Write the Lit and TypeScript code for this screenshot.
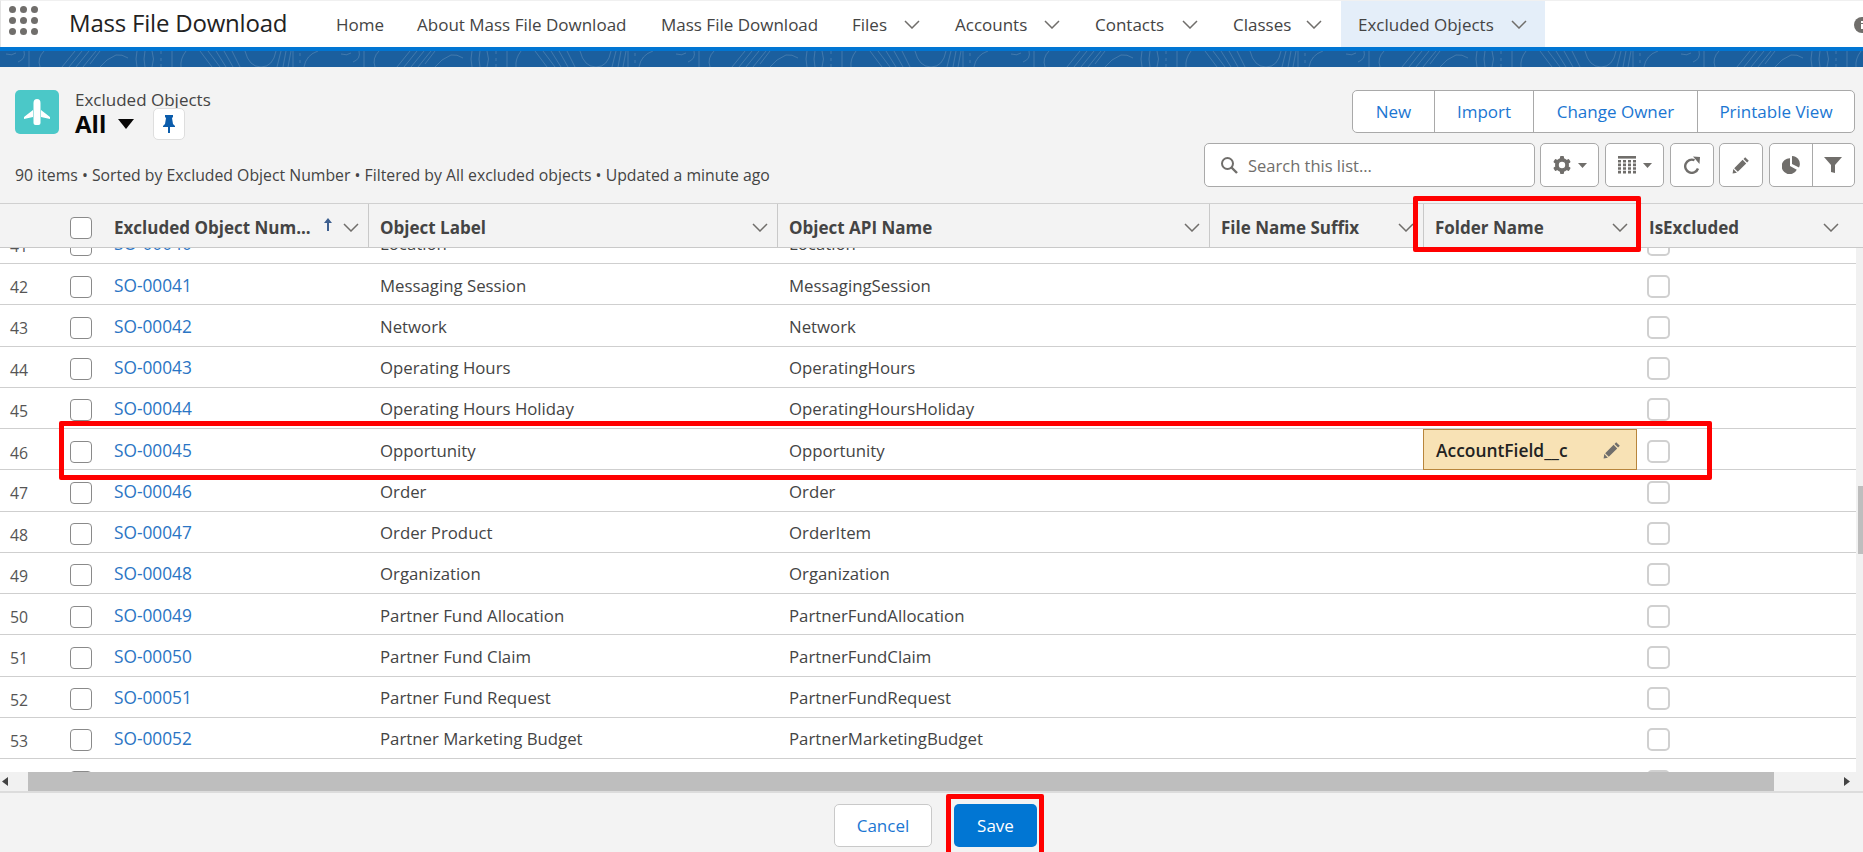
import { LitElement, html, css } from "lit";
import { customElement } from "lit/decorators.js";

const chev = html`<svg class="chev" width="16" height="9" viewBox="0 0 16 9"><path d="M1 1l7 7 7-7" fill="none" stroke="#706e6b" stroke-width="1.5"/></svg>`;

const tabs = [
  { t: "Home", w: 81 },
  { t: "About Mass File Download", w: 244 },
  { t: "Mass File Download", w: 191 },
  { t: "Files", w: 103, c: true },
  { t: "Accounts", w: 140, c: true },
  { t: "Contacts", w: 138, c: true },
  { t: "Classes", w: 124, c: true },
  { t: "Excluded Objects", w: 204, c: true, a: true },
];

const rows = [
  ["41", "SO-00040", "Location", "Location"],
  ["42", "SO-00041", "Messaging Session", "MessagingSession"],
  ["43", "SO-00042", "Network", "Network"],
  ["44", "SO-00043", "Operating Hours", "OperatingHours"],
  ["45", "SO-00044", "Operating Hours Holiday", "OperatingHoursHoliday"],
  ["46", "SO-00045", "Opportunity", "Opportunity"],
  ["47", "SO-00046", "Order", "Order"],
  ["48", "SO-00047", "Order Product", "OrderItem"],
  ["49", "SO-00048", "Organization", "Organization"],
  ["50", "SO-00049", "Partner Fund Allocation", "PartnerFundAllocation"],
  ["51", "SO-00050", "Partner Fund Claim", "PartnerFundClaim"],
  ["52", "SO-00051", "Partner Fund Request", "PartnerFundRequest"],
  ["53", "SO-00052", "Partner Marketing Budget", "PartnerMarketingBudget"],
  ["", "", "", ""],
];

const pencil = (s: number) => html`<svg width="${s}" height="${s}" viewBox="0 0 18 18"><path d="M13.2 1.2l3.6 3.6-1.7 1.7-3.6-3.6zM10.6 3.8l3.6 3.6-8.4 8.4-3.6-3.6zM1.3 13.1l3.6 3.6-4.3.9z" fill="#706e6b"/></svg>`;

@customElement("app-root")
export class AppRoot extends LitElement {
  static styles = css`
    :host { display: block; position: relative; width: 1863px; height: 852px; overflow: hidden; background: #f3f3f3; font-family: "Open Sans", "Liberation Sans", sans-serif; font-size: 16.8px; color: #444; box-sizing: border-box; }
    .nav { display: flex; align-items: stretch; height: 47px; background: #fff; box-sizing: border-box; border-top: 1px solid #f0f0f0; border-left: 1px solid #e4e4e4; overflow: hidden; }
    .nav > * { flex: none; }
    .grid { width: 29px; margin: 5px 0 0 8px; display: grid; grid-template-columns: repeat(3, 7px); grid-auto-rows: 7px; gap: 4px; }
    .grid i { border-radius: 50%; background: #706e6b; }
    .app { width: 251px; margin-left: 31px; font-size: 24px; line-height: 43px; color: #222; letter-spacing: -0.2px; white-space: nowrap; }
    .tab { display: flex; justify-content: space-between; align-items: center; box-sizing: border-box; padding: 0 19px 0 16px; color: #444; white-space: nowrap; height: 46px; font-size: 17px; }
    .tab.active { background: #e4eef9; padding-right: 18px; padding-left: 17px; }
    .info { margin: 16px 0 0 309px; }
    .blue { height: 4px; background: #0176d3; }
    .banner { display: block; width: 1863px; height: 16px; background: #1b5f9e; }
    .head { display: flex; justify-content: space-between; box-sizing: border-box; height: 136px; padding: 23px 8px 0 15px; }
    .titlewrap { display: flex; gap: 16px; }
    .appicon { width: 44px; height: 44px; border-radius: 5px; background: #4bc8c8; display: block; }
    .eyebrow { font-size: 17px; line-height: 20px; color: #444; white-space: nowrap; }
    .allrow { display: flex; align-items: flex-start; height: 32px; }
    .all { font-size: 24px; font-weight: 700; color: #080707; line-height: 28px; }
    .caret { margin: 9px 0 0 12px; }
    .pin { width: 32px; height: 32px; box-sizing: border-box; margin: -2px 0 0 19px; background: #fff; border: 1px solid #dedede; border-radius: 5px; display: flex; align-items: center; justify-content: center; }
    .meta { margin-top: 22px; line-height: 22px; font-size: 15.8px; white-space: nowrap; }
    .right { display: flex; flex-direction: column; align-items: flex-end; gap: 10px; }
    .btngroup { display: flex; height: 43px; background: #fff; border: 1px solid #a9a9a9; border-radius: 5px; box-sizing: border-box; font-size: 17px; }
    .btngroup span { display: flex; align-items: center; justify-content: center; color: #1b76d2; border-left: 1px solid #a9a9a9; box-sizing: border-box; }
    .btngroup span:first-child { border-left: 0; }
    .tools { display: flex; height: 44px; width: 851px; margin-right: 0; }
    .search { display: flex; align-items: center; gap: 10px; box-sizing: border-box; width: 331px; height: 44px; background: #fff; border: 1px solid #a9a9a9; border-radius: 5px; padding-left: 15px; color: #706e6b; margin-left: auto; font-size: 16.5px; }
    .tool { display: flex; align-items: center; justify-content: center; gap: 7px; box-sizing: border-box; height: 44px; background: #fff; border: 1px solid #a9a9a9; border-radius: 5px; }
    .w59 { width: 59px; margin-left: 5px; }
    .w59b { width: 59px; margin-left: 6px; }
    .w44 { width: 44px; margin-left: 6px; }
    .w44b { width: 44px; margin-left: 5px; }
    .pie { width: 86px; margin-left: 6px; gap: 0; }
    .pie b { flex: 1; height: 100%; display: flex; align-items: center; justify-content: center; }
    .pie b + b { border-left: 1px solid #a9a9a9; }
    .thead, .row { display: grid; grid-template-columns: 70px 44px 254px 409px 432px 214px 214px 211px 8px; }
    .thead { height: 45px; border-top: 1px solid #d0d0d0; border-bottom: 1px solid #c9c9c9; box-sizing: border-box; align-items: stretch; }
    .th { display: flex; align-items: center; justify-content: space-between; font-weight: 700; font-size: 17px; color: #444; padding: 4px 9px 0 11px; border-left: 1px solid #c9c9c9; white-space: nowrap; min-width: 0; }
    .th.first { border-left: 0; padding: 4px 9px 0 0; }
    .sort { display: flex; align-items: center; gap: 10px; }
    .arrow { margin-top: -6px; }
    .body { display: flex; height: 524px; overflow: hidden; }
    .rows { width: 1856px; background: #fff; flex: none; overflow: hidden; }
    .rowsin { margin-top: -25.25px; }
    .row { height: 41.25px; box-sizing: border-box; border-bottom: 1.5px solid #cfcfcf; align-items: center; }
    .num { padding-left: 10px; padding-top: 6px; color: #555; font-size: 15.8px; }
    .cell { padding: 2px 0 0 12px; white-space: nowrap; }
    .link { padding-top: 2px; color: #2a75c4; font-size: 17.3px; }
    .cb { display: block; width: 22px; height: 22px; box-sizing: border-box; margin-top: 5px; background: #fff; border: 1.5px solid #8a8a8a; border-radius: 4px; }
    .cb.hcb { margin-top: 13px; }
    .cb.off { width: 23px; height: 23px; border: 2px solid #d0d0d0; margin: 4px 0 0 10px; border-radius: 5px; }
    .edit { align-self: stretch; display: flex; align-items: center; justify-content: space-between; box-sizing: border-box; height: 41px; background: #f8e2b5; border: 1px solid #b8853c; padding: 0 15px 0 12px; font-weight: 600; color: #222; font-size: 17.4px; }
    .vtrack { flex: 1; background: #f1f1f1; }
    .vthumb { width: 5px; height: 68px; margin: 238px 0 0 2px; background: #bebebe; }
    .hscroll { display: flex; align-items: stretch; height: 21px; background: #f1f1f1; border-bottom: 2px solid #dcdcdc; box-sizing: border-box; }
    .harrow { width: 28px; display: flex; align-items: center; padding-left: 2px; box-sizing: border-box; }
    .hthumb { width: 1746px; background: #bebebe; }
    .harrow.r { width: 89px; justify-content: flex-end; padding-right: 13px; }
    .foot { display: flex; justify-content: center; gap: 22px; padding: 11px 0 0 8px; font-size: 17px; }
    .foot span { display: flex; align-items: center; justify-content: center; box-sizing: border-box; height: 43px; border-radius: 5px; }
    .cancel { width: 98px; background: #fff; border: 1px solid #c9c9c9; color: #1b76d2; }
    .save { width: 83px; background: #0176d3; color: #fff; }
    .mark { position: absolute; box-sizing: border-box; border: 5px solid #f00; border-radius: 2px; pointer-events: none; }
    .m1 { left: 1413px; top: 196px; width: 228px; height: 56px; }
    .m2 { left: 59px; top: 421px; width: 1653px; height: 59px; }
    .m3 { left: 946px; top: 794px; width: 98px; height: 66px; }
  `;

  header(t: string) {
    return html`<div class="th"><span>${t}</span>${chev}</div>`;
  }

  render() {
    return html`
      <div class="nav">
        <div class="grid">${Array.from({ length: 9 }, () => html`<i></i>`)}</div>
        <div class="app">Mass File Download</div>
        ${tabs.map(
          (t) => html`<div class="tab ${t.a ? "active" : ""}" style="width:${t.w}px"><span>${t.t}</span>${t.c ? chev : ""}</div>`
        )}
        <svg class="info" width="16" height="16" viewBox="0 0 16 16"><circle cx="8" cy="8" r="8" fill="#706e6b"/><rect x="7" y="7" width="2" height="5" fill="#fff"/><rect x="7" y="4" width="2" height="2" fill="#fff"/></svg>
      </div>
      <div class="blue"></div>
      <svg class="banner" viewBox="0 0 1863 16">
        <defs>
          <pattern id="tile" width="335" height="16" patternUnits="userSpaceOnUse">
            <g fill="none" stroke="#fff" stroke-opacity=".16" stroke-width="1">
              <path d="M6 3q6 2 10-1M24 0q2 8-6 11M29 0v16M44 0q-7 7-4 16"/>
              <path d="M62 16L75 0M69 16L82 0M76 16L89 0M83 16L96 0M90 13L100 0"/>
              <path d="M100 16q6-8 16-12q6-1 12 3"/>
              <path d="M137 0q-2 8 0 16M145 0q-2 8 0 16M152 0q3 8 0 16M161 0v3M161 7v3M161 13v3M172 0v16M186 0q-6 8-5 16"/>
              <path d="M200 0l12 16M208 0l12 16M216 0l10 16M224 0l9 16M232 0l8 16"/>
              <path d="M245 0q4 16 16 16q12 0 15-16"/>
              <path d="M277 16l4-16M283 16l3-16M288 16l3-16M293 0v16M300 2v3M300 9v3M318 0q-12 4-14 16"/>
            </g>
          </pattern>
        </defs>
        <rect width="1863" height="16" fill="url(#tile)"/>
      </svg>

      <div class="head">
        <div>
          <div class="titlewrap">
            <svg class="appicon" viewBox="0 0 44 44"><path d="M18.5 13q0-4 3.5-4t3.5 4v20q0 2-2 2h-3q-2 0-2-2z" fill="#fff"/><path d="M18 20L9 27v2l9-2zM26 20l9 7v2l-9-2z" fill="#fff"/></svg>
            <div>
              <div class="eyebrow">Excluded Objects</div>
              <div class="allrow">
                <span class="all">All</span>
                <svg class="caret" width="16" height="10" viewBox="0 0 16 10"><path d="M0 0h16L8 10z" fill="#080707"/></svg>
                <span class="pin"><svg width="12" height="18" viewBox="0 0 12 18"><path d="M2 0h8v2L9 3l1 6 2 2v1H0v-1l2-2 1-6-1-1zM5 12h2v6H5z" fill="#0b5cab"/></svg></span>
              </div>
            </div>
          </div>
          <div class="meta">90 items • Sorted by Excluded Object Number • Filtered by All excluded objects • Updated a minute ago</div>
        </div>
        <div class="right">
          <div class="btngroup">
            <span style="width:81px">New</span>
            <span style="width:99px">Import</span>
            <span style="width:164px">Change Owner</span>
            <span style="width:157px">Printable View</span>
          </div>
          <div class="tools">
            <div class="search">
              <svg width="18" height="18" viewBox="0 0 18 18"><circle cx="7.5" cy="7.5" r="5.5" fill="none" stroke="#706e6b" stroke-width="2"/><path d="M11.5 11.5L17 17" stroke="#706e6b" stroke-width="2.4"/></svg>
              <span>Search this list...</span>
            </div>
            <div class="tool w59">
              <svg width="18" height="18" viewBox="0 0 18 18"><g fill="#706e6b"><rect x="7" y="0" width="4" height="18" rx="1"/><rect x="7" y="0" width="4" height="18" rx="1" transform="rotate(60 9 9)"/><rect x="7" y="0" width="4" height="18" rx="1" transform="rotate(120 9 9)"/></g><circle cx="9" cy="9" r="5.5" fill="none" stroke="#706e6b" stroke-width="3"/><circle cx="9" cy="9" r="3.2" fill="#fff"/></svg>
              <svg width="9" height="5" viewBox="0 0 9 5"><path d="M0 0h9L4.5 5z" fill="#706e6b"/></svg>
            </div>
            <div class="tool w59b">
              <svg width="18" height="18" viewBox="0 0 18 18"><g fill="#706e6b"><rect width="18" height="2.6"/><path d="M0 4h3v2.6H0zM5 4h3v2.6H5zM10 4h3v2.6h-3zM15 4h3v2.6h-3zM0 7.6h3v2.6H0zM5 7.6h3v2.6H5zM10 7.6h3v2.6h-3zM15 7.6h3v2.6h-3zM0 11.2h3v2.6H0zM5 11.2h3v2.6H5zM10 11.2h3v2.6h-3zM15 11.2h3v2.6h-3zM0 14.8h3v2.6H0zM5 14.8h3v2.6H5zM10 14.8h3v2.6h-3zM15 14.8h3v2.6h-3z"/></g></svg>
              <svg width="9" height="5" viewBox="0 0 9 5"><path d="M0 0h9L4.5 5z" fill="#706e6b"/></svg>
            </div>
            <div class="tool w44">
              <svg width="18" height="18" viewBox="0 0 18 18"><path d="M15 12.5A6.6 6.6 0 1 1 11.5 4.2" fill="none" stroke="#706e6b" stroke-width="2.4"/><path d="M10 .5L17 1l-.5 7z" fill="#706e6b"/></svg>
            </div>
            <div class="tool w44b">${pencil(18)}</div>
            <div class="tool pie">
              <b><svg width="18" height="18" viewBox="0 0 18 18"><path d="M8 2.2V10l6.8 3.8A8 8 0 1 1 8 2.2z" fill="#706e6b"/><path d="M10 0a8 8 0 0 1 7 11.6L10 8z" fill="#706e6b"/></svg></b>
              <b><svg width="18" height="18" viewBox="0 0 18 18"><path d="M0 1h18L11 9v8l-4-1V9z" fill="#706e6b"/></svg></b>
            </div>
          </div>
        </div>
      </div>

      <div class="thead">
        <div></div>
        <div><span class="cb hcb"></span></div>
        <div class="th first">
          <span>Excluded Object Num...</span>
          <span class="sort">
            <svg class="arrow" width="10" height="13" viewBox="0 0 10 13"><path d="M5 0l4 5H6v8H4V5H1z" fill="#3e5f8f"/></svg>
            ${chev}
          </span>
        </div>
        ${this.header("Object Label")}
        ${this.header("Object API Name")}
        ${this.header("File Name Suffix")}
        ${this.header("Folder Name")}
        ${this.header("IsExcluded")}
        <div></div>
      </div>

      <div class="body">
        <div class="rows"><div class="rowsin">
          ${rows.map(
            (r) => html`<div class="row">
              <div class="num">${r[0]}</div>
              <div><span class="cb"></span></div>
              <div class="link">${r[1]}</div>
              <div class="cell">${r[2]}</div>
              <div class="cell">${r[3]}</div>
              <div></div>
              ${r[0] === "46"
                ? html`<div class="edit"><span>AccountField__c</span>${pencil(18)}</div>`
                : html`<div></div>`}
              <div><span class="cb off"></span></div>
              <div></div>
            </div>`
          )}
        </div></div>
        <div class="vtrack"><div class="vthumb"></div></div>
      </div>

      <div class="hscroll">
        <div class="harrow"><svg width="6" height="9" viewBox="0 0 6 9"><path d="M6 0v9L0 4.5z" fill="#444"/></svg></div>
        <div class="hthumb"></div>
        <div class="harrow r"><svg width="6" height="9" viewBox="0 0 6 9"><path d="M0 0v9l6-4.5z" fill="#444"/></svg></div>
      </div>

      <div class="foot">
        <span class="cancel">Cancel</span>
        <span class="save">Save</span>
      </div>

      <div class="mark m1"></div>
      <div class="mark m2"></div>
      <div class="mark m3"></div>
    `;
  }
}
